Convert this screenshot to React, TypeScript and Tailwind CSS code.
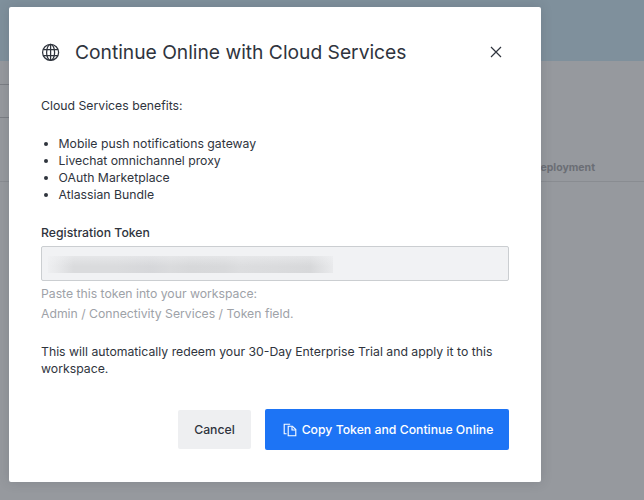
const benefits = [
  'Mobile push notifications gateway',
  'Livechat omnichannel proxy',
  'OAuth Marketplace',
  'Atlassian Bundle',
];

function GlobeIcon() {
  return (
    <svg className="h-5 w-5 shrink-0" viewBox="0 0 20 20" fill="none" stroke="#2f343d" strokeWidth="1.25">
      <circle cx="9.6" cy="10.4" r="8" />
      <ellipse cx="9.6" cy="10.4" rx="4" ry="8" />
      <path d="M9.6 2.4v16M2.2 7.5h14.8M2.2 13.5h14.8" />
    </svg>
  );
}

function CloseIcon() {
  return (
    <svg className="h-3 w-3" viewBox="0 0 12 12" fill="none" stroke="#2f343d" strokeWidth="1.2">
      <path d="M1 1l10 10M11 1L1 11" />
    </svg>
  );
}

function CopyIcon() {
  return (
    <svg className="h-[14px] w-[14px] shrink-0" viewBox="0 0 14 14" fill="none" stroke="#fff" strokeWidth="1.1">
      <path d="M3.6 10.8H1.2V1.2h6" />
      <path d="M5.2 3.2h4.2l3.4 3.4v6.2H5.2z" />
      <path d="M9 3.4v3.6h3.6" />
    </svg>
  );
}

function Backdrop() {
  return (
    <div className="flex h-full flex-col bg-[#96999e]">
      <div className="h-[61px] bg-[#7f909c]" />
      <div className="mt-[23px] h-[34px] w-4 border-y border-[#7b7e84]" />
      <div className="flex h-16 items-end justify-end border-b border-[#898c91] pr-[49px] pb-[5px]">
        <span className="text-[10.5px] leading-4 font-bold text-[#6b6e75]">Deployment</span>
      </div>
    </div>
  );
}

export default function App() {
  return (
    <div className="relative h-[500px] w-[644px] overflow-hidden font-['Inter',sans-serif] text-[#2f343d]">
      <Backdrop />
      <div className="absolute top-[7px] left-[9px] flex h-[475px] w-[532px] flex-col rounded-[2px] bg-white px-8 text-[12.25px] leading-[17px] shadow-[0_0_12px_rgba(47,52,61,0.18)]">
        <header className="mt-[31px] flex h-7 items-center">
          <GlobeIcon />
          <h1 className="ml-[14px] flex-1 text-[19.25px] leading-7 tracking-[-0.02px] whitespace-nowrap">Continue Online with Cloud Services</h1>
          <button aria-label="Close" className="mr-[7px]">
            <CloseIcon />
          </button>
        </header>

        <p className="mt-[31px]">Cloud Services benefits:</p>
        <ul className="mt-[21px] list-disc pl-[17.5px]">
          {benefits.map((benefit) => (
            <li key={benefit}>{benefit}</li>
          ))}
        </ul>

        <label className="mt-[21px] font-medium">Registration Token</label>
        <div className="mt-[5px] flex h-[35px] shrink-0 items-center rounded-[2px] border border-[#cbced1] bg-[#f1f2f4] pl-[6px]">
          <div className="mt-[2px] h-[17px] w-[285px] bg-[linear-gradient(90deg,#eeeff1_0%,#e6e7e9_4%,#dadbdd_9%,#dadbdd_24%,#d6d7da_36%,#dadbdd_43%,#d7d8da_50%,#d8d9db_62%,#dcdddf_67%,#dadbdd_80%,#d7d8da_92%,#e0e1e3_96%,#e9eaec_100%)]">
            <div className="h-full bg-linear-to-b from-[#f1f2f4]/50 to-transparent to-60%" />
          </div>
        </div>
        <p className="mt-[3px] leading-5 tracking-[-0.02px] text-[#9ea2a8]">
          Paste this token into your workspace:
          <br />
          Admin / Connectivity Services / Token field.
        </p>

        <p className="mt-[19px]">
          This will automatically redeem your 30-Day Enterprise Trial and apply it to this workspace.
        </p>

        <footer className="mt-[32px] flex items-center justify-end gap-[14px] font-medium">
          <button className="h-[39px] w-[73px] rounded-[2px] bg-[#eeeff1]">Cancel</button>
          <button className="flex h-[41px] w-[244px] items-center justify-center gap-[5px] rounded-[2px] bg-[#1d74f5] pl-[2px] whitespace-nowrap text-white">
            <CopyIcon />
            Copy Token and Continue Online
          </button>
        </footer>
      </div>
    </div>
  );
}
